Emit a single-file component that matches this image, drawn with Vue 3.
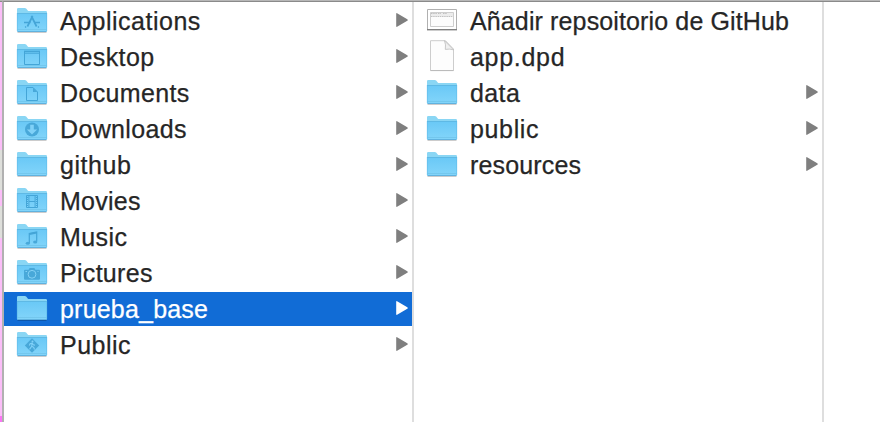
<script setup>
const home = [
  { name: 'Applications', glyph: 'apps', tracking: 0.5 },
  { name: 'Desktop', glyph: 'desktop' },
  { name: 'Documents', glyph: 'document', tracking: 0.35 },
  { name: 'Downloads', glyph: 'download', tracking: 0.35 },
  { name: 'github', tracking: 0.55 },
  { name: 'Movies', glyph: 'film', tracking: 0.25 },
  { name: 'Music', glyph: 'music', tracking: 0.4 },
  { name: 'Pictures', glyph: 'camera', tracking: 0.3 },
  { name: 'prueba_base', selected: true, tracking: 0.2 },
  { name: 'Public', glyph: 'public', tracking: 0.5 },
].map((item) => ({ kind: 'folder', ...item }))

const project = [
  { name: 'Añadir repsoitorio de GitHub', kind: 'image', tracking: 0.13 },
  { name: 'app.dpd', kind: 'file', tracking: 0.7 },
  { name: 'data', kind: 'folder' },
  { name: 'public', kind: 'folder', tracking: 0.65 },
  { name: 'resources', kind: 'folder', tracking: 0.15 },
]

const columns = [home, project]
</script>

<template>
  <div class="finder">
    <svg class="defs" width="0" height="0" aria-hidden="true">
      <defs>
        <linearGradient id="folder-face" x1="0" y1="0" x2="0" y2="1">
          <stop offset="0" stop-color="#69c8f6" />
          <stop offset="1" stop-color="#83d5fa" />
        </linearGradient>
      </defs>
    </svg>
    <div class="edge"></div>
    <div class="browser">
      <ul v-for="(column, c) in columns" :key="c" class="column">
        <li v-for="item in column" :key="item.name" class="row" :class="{ selected: item.selected }">
          <svg v-if="item.kind === 'folder'" class="icon" viewBox="0 0 32 34">
            <path d="M1.500 28.500h29" stroke="#000" stroke-opacity=".2" />
            <path d="M1 27V5.200Q1 4 2.200 4h6.500q1 0 1.700.8l1.300 1.700q.5.500 1.500.500h16.600Q31 7 31 8.200V27z" fill="#8ad6f4" />
            <path d="M1 9h30v17.500Q31 28 29.500 28h-27Q1 28 1 26.500z" fill="url(#folder-face)" />
            <path d="M1 9.500h30" stroke="#5eb9e5" />
            <path d="M1.500 25.500h29" stroke="#70c4ea" stroke-width=".8" />
            <path d="M1.500 27.500h29" stroke="#5caedb" stroke-width=".9" />
            <path d="M1.300 9v18M30.700 9v18" stroke="#60bbe8" stroke-width=".6" />
            <g class="glyph">
              <g v-if="item.glyph === 'apps'">
                <path d="M11.400 22.500l5.200-10.500M15.400 12l5.200 10.500" stroke-width="1.700" />
                <path d="M8 18.500h6.500M18 18.500h6M10 22.500l-.8 1M22 22.500l.8 1" stroke-width="1.300" />
              </g>
              <g v-else-if="item.glyph === 'desktop'">
                <path d="M8.500 11.500h15v13h-15z" />
                <path d="M8 11.500h16" stroke-width="1.700" />
                <path d="M9 13.500h14" stroke-width=".7" />
              </g>
              <g v-else-if="item.glyph === 'document'">
                <path d="M10.500 11.500h6.500l4.500 4.500v8.500h-11z" />
                <path d="M17 11.500v4.500h4.500z" class="solid" />
              </g>
              <g v-else-if="item.glyph === 'download'">
                <circle cx="16" cy="17.500" r="7" class="solid" />
                <path d="M14.200 12.800h3.600v4.800h3.400L16 22.600l-5.200-5h3.400z" class="cut" />
              </g>
              <g v-else-if="item.glyph === 'film'">
                <path d="M10.500 11.500h11v12h-11z" />
                <path d="M12.900 11v13M19.100 11v13M13 17.500h6" />
                <path d="M11.500 11v13M20.500 11v13" stroke-dasharray="1 1" />
              </g>
              <g v-else-if="item.glyph === 'music'">
                <path d="M13.300 22.900v-9.400l7.400-1.500v9.600" stroke-width="1.200" />
                <path d="M13.300 14.200l7.400-1.500" stroke-width="1.800" />
                <ellipse cx="11.800" cy="23.200" rx="2.100" ry="1.500" class="solid" />
                <ellipse cx="19.200" cy="22" rx="2.100" ry="1.500" class="solid" />
              </g>
              <g v-else-if="item.glyph === 'camera'">
                <path d="M9 13.800h3.600l1-1.800h4.800l1 1.800H23q1 0 1 1v8q0 1-1 1H9q-1 0-1-1v-8q0-1 1-1z" class="solid" />
                <circle cx="16" cy="18.300" r="3.900" stroke="#85d2f6" stroke-width="1" />
                <path d="M9.500 15.500h1.500M21.500 15.500h1" stroke="#85d2f6" />
              </g>
              <g v-else-if="item.glyph === 'public'" transform="translate(0 -1.200)">
                <path d="M16 11.500l7.200 7.200-7.200 7.200-7.200-7.200z" class="solid" />
                <circle cx="16.500" cy="14.800" r="1" class="cut" />
                <path d="M16 16.500l-.3 3-2.200 3M15.700 19.500l2 1 .8 2.200M13.300 18.600l.8-1.700 2-.5 1.200 1.500 1.700.4" class="walker" />
              </g>
            </g>
          </svg>

          <svg v-else-if="item.kind === 'file'" class="icon" viewBox="0 0 32 34">
            <path d="M4.500 .7h15l8 8.300v21.500h-23z" fill="#fdfdfd" stroke="#cdcdcd" />
            <path d="M4.500 30.600h23" stroke="#b9b9b9" />
            <path d="M18.500 .7q1.600 4 .8 8.700 4.600-.8 8.200.4z" fill="#f0f0f0" stroke="#bcbcbc" stroke-width=".8" />
          </svg>

          <svg v-else class="icon" viewBox="0 0 32 34">
            <path d="M1 26.500h30" stroke="#000" stroke-opacity=".2" />
            <path d="M1.500 5.500h29v20h-29z" fill="#fff" stroke="#b0b0b0" />
            <path d="M1 25.500h30" stroke="#808080" />
            <path d="M4.500 8.500h23v14h-23z" fill="#fcfcfc" stroke="#c1c1c1" stroke-width=".8" />
            <path d="M5 9h22v3.500H5z" fill="#ececec" />
            <path d="M5 9.500h6m1 0h3m2 0h4M5 12.500h22" stroke="#b4b4b4" stroke-width=".8" stroke-dasharray="1.500 .7" />
          </svg>
          <span class="name" :style="{ letterSpacing: (item.tracking ?? 0.4) + 'px' }">{{ item.name }}</span>
          <svg v-if="item.kind === 'folder'" class="arrow" viewBox="0 0 12 14">
            <path d="M.2 1Q.2-.4 1.500.4L11.300 6.200q1 .8 0 1.600L1.500 13.600Q.2 14.400.2 13z" />
          </svg>
        </li>
      </ul>
    </div>
  </div>
</template>

<style>
body {
  background: #fff;
}
</style>

<style scoped>
.finder {
  display: grid;
  grid-template-columns: 2px 1fr;
  box-sizing: border-box;
  height: 422px;
  overflow: hidden;
  border-top: 1px solid #b7b7b7;
  font-family: "Liberation Sans", Arial, sans-serif;
}
.defs {
  position: absolute;
}
.edge {
  border-top: 1px solid #8a8a8a;
  background: linear-gradient(
    #fbbdf8 148px, #dedfdb 148px 188px, #fbbdf8 188px 204px,
    #dedfdb 204px 236px, #fbbdf8 236px 414px, #fc73f5 414px
  );
}
.browser {
  display: flex;
  border-top: 1px solid #8a8a8a;
  border-left: 2px solid #b1b1b1;
  background: #fff;
}
.column {
  display: flex;
  flex-direction: column;
  gap: 2px;
  box-sizing: border-box;
  width: 410px;
  margin: 0;
  padding: 2px 0 0;
  border-right: 2px solid #dedede;
  list-style: none;
}
.row {
  display: flex;
  align-items: center;
  height: 34px;
  padding: 0 4px 0 12px;
  color: #262626;
}
.row.selected {
  background: #116cd6;
  color: #fff;
}
.icon {
  flex: none;
  width: 32px;
  height: 34px;
}
.name {
  flex: 1;
  margin-left: 12px;
  font-size: 25px;
  line-height: 34px;
  white-space: pre;
  -webkit-text-stroke: 0.25px currentColor;
}
.arrow {
  flex: none;
  width: 12px;
  height: 14px;
  margin-bottom: 2px;
  fill: #7f7f7f;
}
.selected .arrow {
  fill: #fff;
}
.glyph {
  fill: none;
  stroke: #44a5d7;
}
.glyph .solid {
  fill: #48a8d9;
  stroke: none;
}
.glyph .cut {
  fill: #80d1f8;
  stroke: none;
}
.glyph .walker {
  stroke: #80d1f8;
  stroke-width: 1.1;
}
</style>
